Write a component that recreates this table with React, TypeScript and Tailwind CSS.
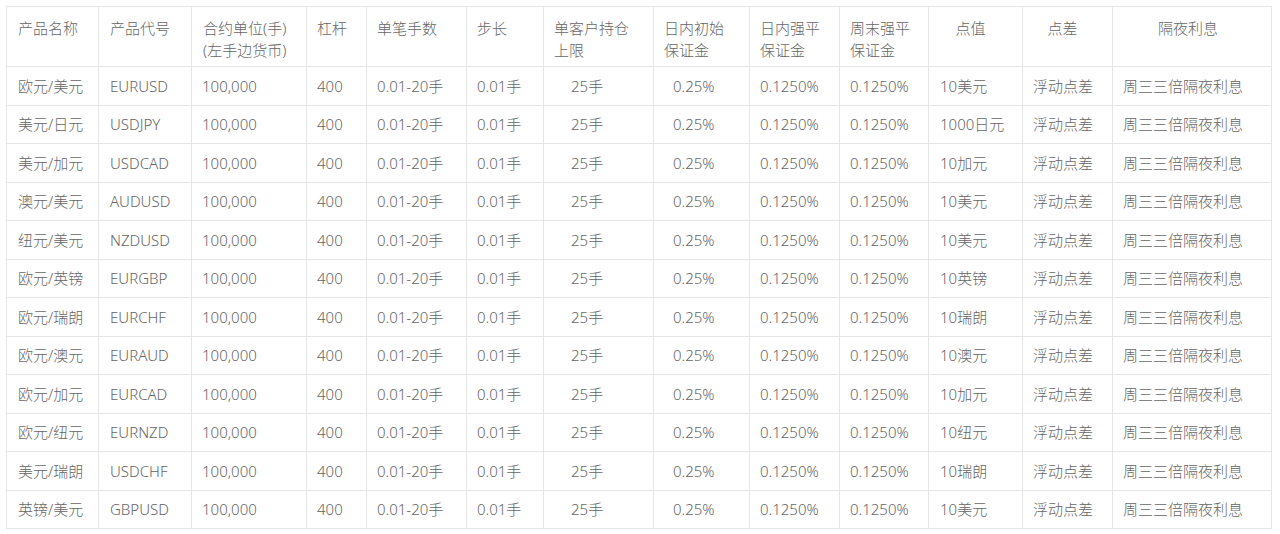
const headers: { label: string[]; className: string }[] = [
  { label: ["产品名称"], className: "text-left pl-[11px]" },
  { label: ["产品代号"], className: "text-left pl-[11px]" },
  { label: ["合约单位(手)", "(左手边货币)"], className: "text-left pl-[11px]" },
  { label: ["杠杆"], className: "text-left pl-[10px]" },
  { label: ["单笔手数"], className: "text-left pl-[10px]" },
  { label: ["步长"], className: "text-left pl-[10px]" },
  { label: ["单客户持仓", "上限"], className: "text-left pl-[10px]" },
  { label: ["日内初始", "保证金"], className: "text-left pl-[10px]" },
  { label: ["日内强平", "保证金"], className: "text-left pl-[10px]" },
  { label: ["周末强平", "保证金"], className: "text-left pl-[10px]" },
  { label: ["点值"], className: "text-center pr-[10px]" },
  { label: ["点差"], className: "text-center pr-[10px]" },
  { label: ["隔夜利息"], className: "text-center pr-[8px]" },
];

const widths = [92, 93, 115, 60, 100, 77, 110, 96, 90, 89, 94, 90, 159];

const cellPad = [
  "pl-[11px]",
  "pl-[11px]",
  "pl-[10px]",
  "pl-[10px]",
  "pl-[10px]",
  "pl-[10px]",
  "pl-[27px]",
  "pl-[19px]",
  "pl-[10px]",
  "pl-[10px]",
  "pl-[11px]",
  "pl-[10px]",
  "pl-[10px]",
];

const products = [
  ["欧元/美元", "EURUSD", "10美元"],
  ["美元/日元", "USDJPY", "1000日元"],
  ["美元/加元", "USDCAD", "10加元"],
  ["澳元/美元", "AUDUSD", "10美元"],
  ["纽元/美元", "NZDUSD", "10美元"],
  ["欧元/英镑", "EURGBP", "10英镑"],
  ["欧元/瑞朗", "EURCHF", "10瑞朗"],
  ["欧元/澳元", "EURAUD", "10澳元"],
  ["欧元/加元", "EURCAD", "10加元"],
  ["欧元/纽元", "EURNZD", "10纽元"],
  ["美元/瑞朗", "USDCHF", "10瑞朗"],
  ["英镑/美元", "GBPUSD", "10美元"],
];

export default function App() {
  return (
    <div className="min-h-screen bg-white p-[6px] font-['Noto_Sans','Noto_Sans_CJK_SC',sans-serif] text-[15px] text-[#666] font-light">
      <table className="table-fixed border-collapse w-[1265px]">
        <colgroup>
          {widths.map((w, i) => (
            <col key={i} style={{ width: w }} />
          ))}
        </colgroup>
        <thead>
          <tr>
            {headers.map((h, i) => (
              <th
                key={i}
                className={`h-[60px] align-top pt-[10px] font-light leading-[22px] border border-[#e6e6e6] ${h.className}`}
              >
                {h.label.map((l, j) => (
                  <div key={j}>{l}</div>
                ))}
              </th>
            ))}
          </tr>
        </thead>
        <tbody>
          {products.map(([name, code, pip]) => {
            const cells = [
              name,
              code,
              "100,000",
              "400",
              "0.01-20手",
              "0.01手",
              "25手",
              "0.25%",
              "0.1250%",
              "0.1250%",
              pip,
              "浮动点差",
              "周三三倍隔夜利息",
            ];
            return (
              <tr key={code}>
                {cells.map((c, i) => (
                  <td
                    key={i}
                    className={`h-[38.5px] p-0 align-middle whitespace-nowrap border border-[#e6e6e6] ${cellPad[i]}`}
                  >
                    {c}
                  </td>
                ))}
              </tr>
            );
          })}
        </tbody>
      </table>
    </div>
  );
}
